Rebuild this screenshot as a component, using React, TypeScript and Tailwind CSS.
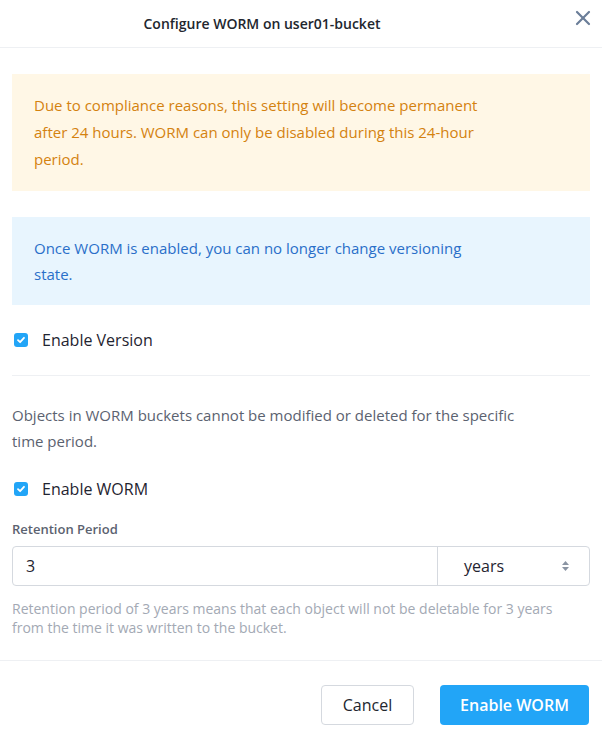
import { X } from 'lucide-react'

function CheckBox({ label }: { label: string }) {
  return (
    <label className="ml-[2px] flex items-center gap-[14px]">
      <span className="flex h-[14px] w-[14px] items-center justify-center rounded-[3px] bg-[#22a5f7]">
        <svg width="10" height="10" viewBox="0 0 10 10" fill="none">
          <path d="M2 5.2 4.1 7.2 8 2.8" stroke="white" strokeWidth="1.8" strokeLinecap="round" strokeLinejoin="round" />
        </svg>
      </span>
      <span className="text-[16px] leading-[24px] text-[#1f2430]">{label}</span>
    </label>
  )
}

export default function App() {
  return (
    <div className="h-[735px] w-[602px] bg-white" style={{ fontFamily: '"Open Sans", "Noto Sans", sans-serif' }}>
      {/* Header */}
      <div className="relative flex h-[48px] items-center justify-center border-b border-[#eef0f3] pr-[78px]">
        <h2 className="text-[14px] font-semibold text-[#22262e]">Configure WORM on user01-bucket</h2>
        <X className="absolute right-[7px] top-[6px] text-[#6b7e99]" size={24} strokeWidth={2.2} />
      </div>

      <div className="px-[12px]">
        {/* Warning */}
        <div className="mt-[26px] bg-[#fff7e6] py-[18px] pl-[22px] pr-[100px] text-[15px] leading-[27px] text-[#d4820f]">
          Due to compliance reasons, this setting will become permanent after 24 hours. WORM can only be disabled during this 24-hour period.
        </div>

        {/* Info */}
        <div className="mt-[26px] bg-[#e8f5fe] py-[18px] pl-[22px] pr-[100px] text-[15px] leading-[26px] text-[#2a6fc9]">
          Once WORM is enabled, you can no longer change versioning state.
        </div>

        <div className="mt-[23px]">
          <CheckBox label="Enable Version" />
        </div>

        <div className="mt-[23px] border-t border-[#eef0f3] pt-[26px]">
          <p className="pr-[50px] text-[15px] leading-[26px] text-[#5b6270]">
            Objects in WORM buckets cannot be modified or deleted for the specific time period.
          </p>
          <div className="mt-[23px]">
            <CheckBox label="Enable WORM" />
          </div>

          <div className="mt-[18px] text-[13px] font-semibold leading-[20px] text-[#5b6270]">Retention Period</div>
          <div className="mt-[7px] flex h-[40px] rounded-[4px] border border-[#d5d9df]">
            <div className="flex flex-1 items-center px-[13px] text-[16px] text-[#1f2430]">3</div>
            <div className="flex w-[152px] items-center justify-between border-l border-[#d5d9df] pl-[26px] pr-[20px] text-[16px] text-[#1f2430]">
              <span>years</span>
              <svg width="7" height="10" viewBox="0 0 7 10" fill="#8a94a3">
                <path d="M3.5 0 7 4H0z M0 6h7L3.5 10z" />
              </svg>
            </div>
          </div>
          <p className="mt-[13px] pr-[20px] text-[14px] leading-[19px] text-[#a3a9b4]">
            Retention period of 3 years means that each object will not be deletable for 3 years from the time it was written to the bucket.
          </p>
        </div>
      </div>

      {/* Footer */}
      <div className="mt-[23px] flex justify-end gap-[26px] border-t border-[#eef0f3] px-[13px] pt-[24px]">
        <button className="h-[40px] w-[93px] rounded-[4px] border border-[#d5d9df] bg-white text-[16px] text-[#22262e]">Cancel</button>
        <button className="h-[40px] w-[149px] rounded-[4px] bg-[#22a5f7] text-[16px] font-semibold text-white">Enable WORM</button>
      </div>
    </div>
  )
}
